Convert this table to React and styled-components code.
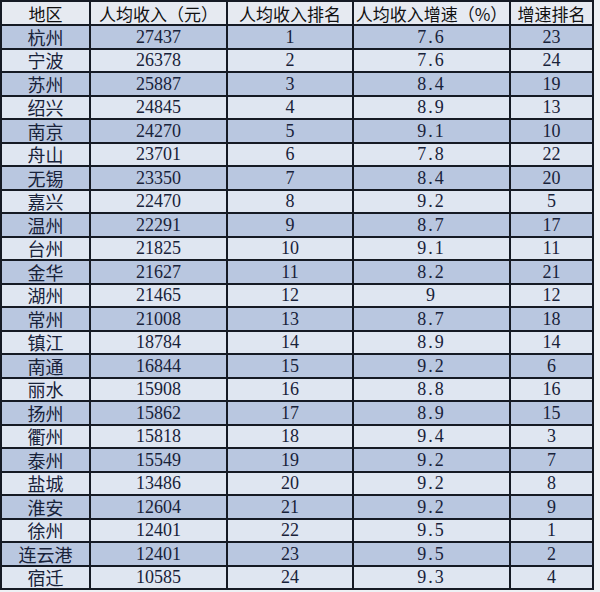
import React from "react";
import styled, { createGlobalStyle } from "styled-components";

const rows = [
  ["杭州", "27437", 1, "7.6", 23],
  ["宁波", "26378", 2, "7.6", 24],
  ["苏州", "25887", 3, "8.4", 19],
  ["绍兴", "24845", 4, "8.9", 13],
  ["南京", "24270", 5, "9.1", 10],
  ["舟山", "23701", 6, "7.8", 22],
  ["无锡", "23350", 7, "8.4", 20],
  ["嘉兴", "22470", 8, "9.2", 5],
  ["温州", "22291", 9, "8.7", 17],
  ["台州", "21825", 10, "9.1", 11],
  ["金华", "21627", 11, "8.2", 21],
  ["湖州", "21465", 12, "9", 12],
  ["常州", "21008", 13, "8.7", 18],
  ["镇江", "18784", 14, "8.9", 14],
  ["南通", "16844", 15, "9.2", 6],
  ["丽水", "15908", 16, "8.8", 16],
  ["扬州", "15862", 17, "8.9", 15],
  ["衢州", "15818", 18, "9.4", 3],
  ["泰州", "15549", 19, "9.2", 7],
  ["盐城", "13486", 20, "9.2", 8],
  ["淮安", "12604", 21, "9.2", 9],
  ["徐州", "12401", 22, "9.5", 1],
  ["连云港", "12401", 23, "9.5", 2],
  ["宿迁", "10585", 24, "9.3", 4],
];

const headers = ["地区", "人均收入（元）", "人均收入排名", "人均收入增速（%）", "增速排名"];
const widths = [89, 137, 126, 157, 83];

const GlobalStyle = createGlobalStyle`
  body {
    margin: 0;
    background: #eef1f5;
    font-family: "Liberation Serif", "Noto Sans CJK SC", serif;
  }
`;

const Page = styled.div`
  width: 600px;
  height: 592px;
  overflow: hidden;
`;

const Table = styled.table`
  width: 592px;
  border-collapse: collapse;
  table-layout: fixed;
  border: 2px solid #151a24;
`;

const HeadCell = styled.th`
  height: 22px;
  padding: 0;
  border: 2px solid #151a24;
  background: #e6eaf1;
  color: #111;
  font-family: "Noto Sans CJK SC", sans-serif;
  font-weight: 400;
  font-size: 17px;
  line-height: 21px;
  text-align: center;
  white-space: nowrap;
`;

const Row = styled.tr`
  background: ${(p) => (p.$dark ? "#b9c7e0" : "#dfe6f1")};
`;

const Cell = styled.td`
  height: 21.5px;
  padding: 0;
  border: 2px solid #151a24;
  color: #18223a;
  font-family: ${(p) =>
    p.$cjk ? '"Noto Sans CJK SC", sans-serif' : '"Liberation Serif", serif'};
  font-size: 18px;
  line-height: 20px;
  text-align: center;
  letter-spacing: ${(p) => (p.$spaced ? "2px" : "0")};
  white-space: nowrap;
`;

export default function App() {
  return (
    <Page>
      <GlobalStyle />
      <Table>
        <colgroup>
          {widths.map((w, i) => (
            <col key={i} style={{ width: w }} />
          ))}
        </colgroup>
        <thead>
          <tr>
            {headers.map((h, i) => (
              <HeadCell key={i}>{h}</HeadCell>
            ))}
          </tr>
        </thead>
        <tbody>
          {rows.map((r, i) => (
            <Row key={r[0]} $dark={i % 2 === 0}>
              <Cell $cjk>{r[0]}</Cell>
              <Cell>{r[1]}</Cell>
              <Cell>{r[2]}</Cell>
              <Cell $spaced>{r[3]}</Cell>
              <Cell>{r[4]}</Cell>
            </Row>
          ))}
        </tbody>
      </Table>
    </Page>
  );
}
